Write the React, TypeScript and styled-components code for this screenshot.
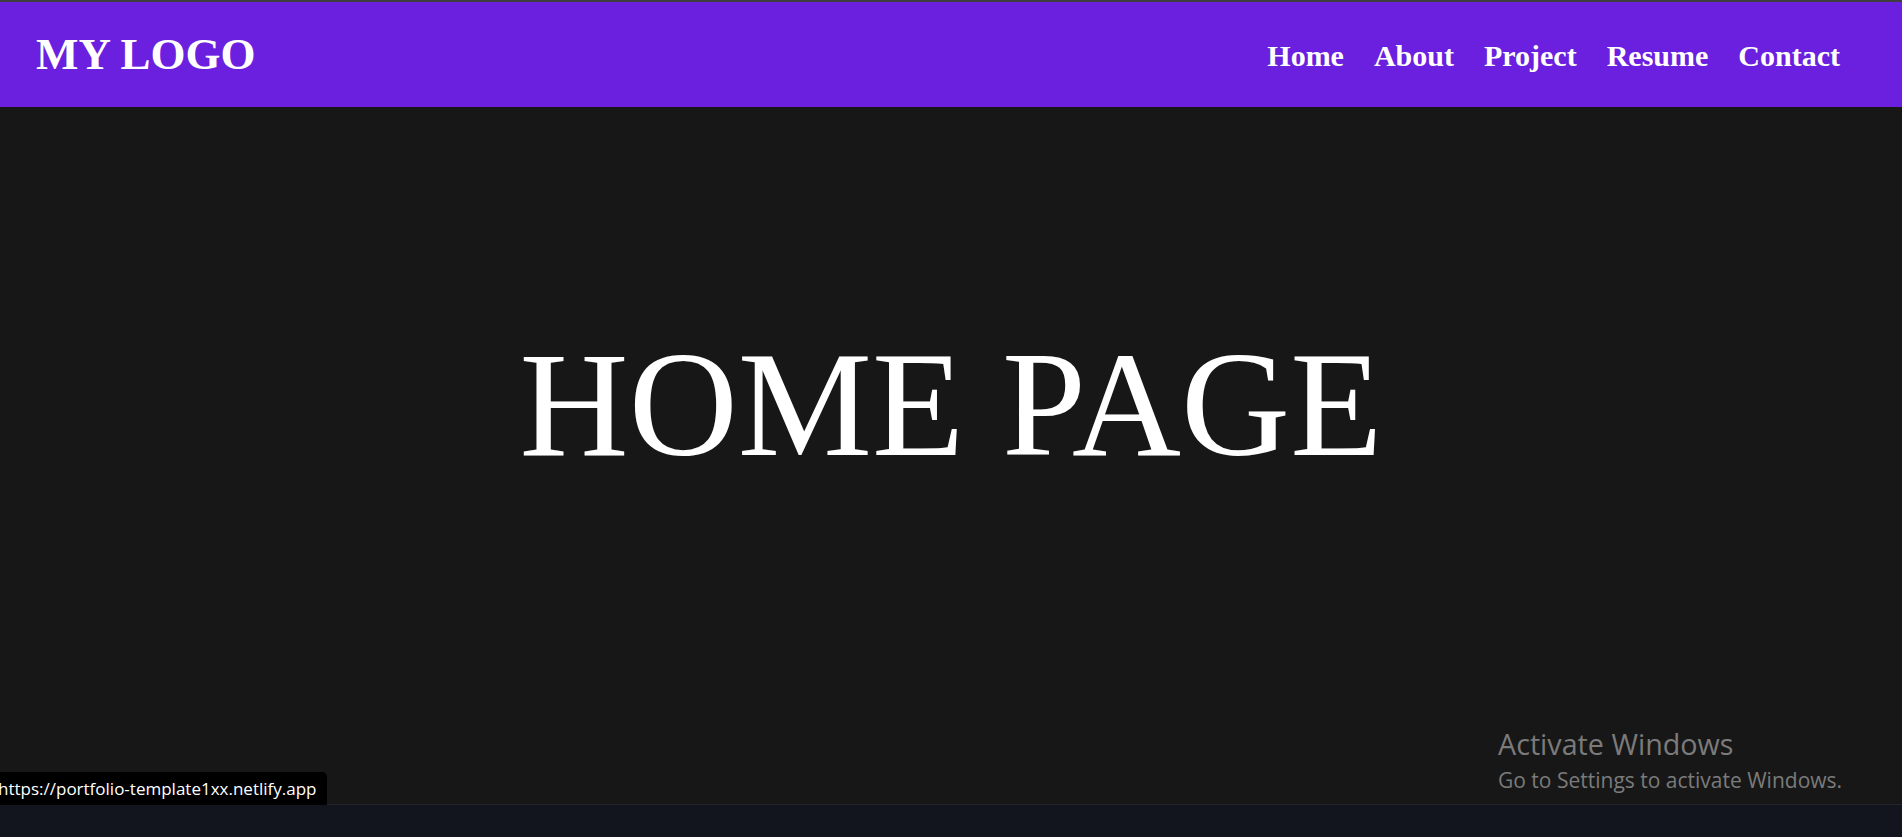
import React from "react";
import styled, { createGlobalStyle } from "styled-components";

const GlobalStyle = createGlobalStyle`
  html, body {
    margin: 0;
    padding: 0;
    background: #171717;
    overflow: hidden;
  }
  * { box-sizing: border-box; }
`;

const Page = styled.div`
  position: relative;
  display: flex;
  flex-direction: column;
  width: 1902px;
  height: 837px;
  background: #171717;
`;

const ChromeEdge = styled.div`
  height: 2px;
  background: #3e3e3e;
  flex: none;
`;

const Header = styled.header`
  flex: none;
  height: 105px;
  background: #6b20e0;
  display: flex;
  align-items: center;
  justify-content: space-between;
  padding: 0 62px 0 36px;
`;

const Logo = styled.div`
  font-family: "Liberation Serif", "Times New Roman", serif;
  font-weight: 700;
  font-size: 45px;
  color: #ffffff;
  line-height: 1;
`;

const Nav = styled.nav`
  display: flex;
  align-items: center;
  gap: 30px;
  margin-top: 2px;
`;

const NavLink = styled.a`
  font-family: "Liberation Serif", "Times New Roman", serif;
  font-weight: 700;
  font-size: 30px;
  color: #ffffff;
  text-decoration: none;
  line-height: 1;
`;

const Main = styled.main`
  flex: 1;
  display: flex;
  justify-content: center;
  align-items: flex-start;
  padding-top: 222px;
  background: #171717;
`;

const Title = styled.h1`
  margin: 0;
  font-family: "Liberation Serif", "Times New Roman", serif;
  font-weight: 400;
  font-size: 151px;
  line-height: 1;
  color: #ffffff;
`;

const BottomStrip = styled.div`
  flex: none;
  height: 33px;
  border-top: 1px solid #24262d;
  background: #12151e;
`;

const StatusBubble = styled.div`
  position: absolute;
  left: -2px;
  bottom: 32px;
  height: 33px;
  padding: 0 11px 0 0;
  display: flex;
  align-items: center;
  background: #000000;
  border-top-right-radius: 5px;
  font-family: "Open Sans", "Noto Sans", sans-serif;
  font-size: 17px;
  color: #ffffff;
  white-space: nowrap;
`;

const Watermark = styled.div`
  position: absolute;
  left: 1498px;
  top: 730px;
  display: flex;
  flex-direction: column;
  font-family: "Open Sans", "Noto Sans", sans-serif;
  color: #7b7b7b;
  white-space: nowrap;
`;

const WatermarkTitle = styled.span`
  font-size: 28.7px;
  line-height: 28px;
`;

const WatermarkText = styled.span`
  margin-top: 8px;
  font-size: 21px;
  line-height: 28px;
`;

const links = ["Home", "About", "Project", "Resume", "Contact"];

export default function App() {
  return (
    <>
      <GlobalStyle />
      <Page>
        <ChromeEdge />
        <Header>
          <Logo>MY LOGO</Logo>
          <Nav>
            {links.map((l) => (
              <NavLink key={l} href="#">
                {l}
              </NavLink>
            ))}
          </Nav>
        </Header>
        <Main>
          <Title>HOME PAGE</Title>
        </Main>
        <BottomStrip />
        <StatusBubble>https://portfolio-template1xx.netlify.app</StatusBubble>
        <Watermark>
          <WatermarkTitle>Activate Windows</WatermarkTitle>
          <WatermarkText>Go to Settings to activate Windows.</WatermarkText>
        </Watermark>
      </Page>
    </>
  );
}
